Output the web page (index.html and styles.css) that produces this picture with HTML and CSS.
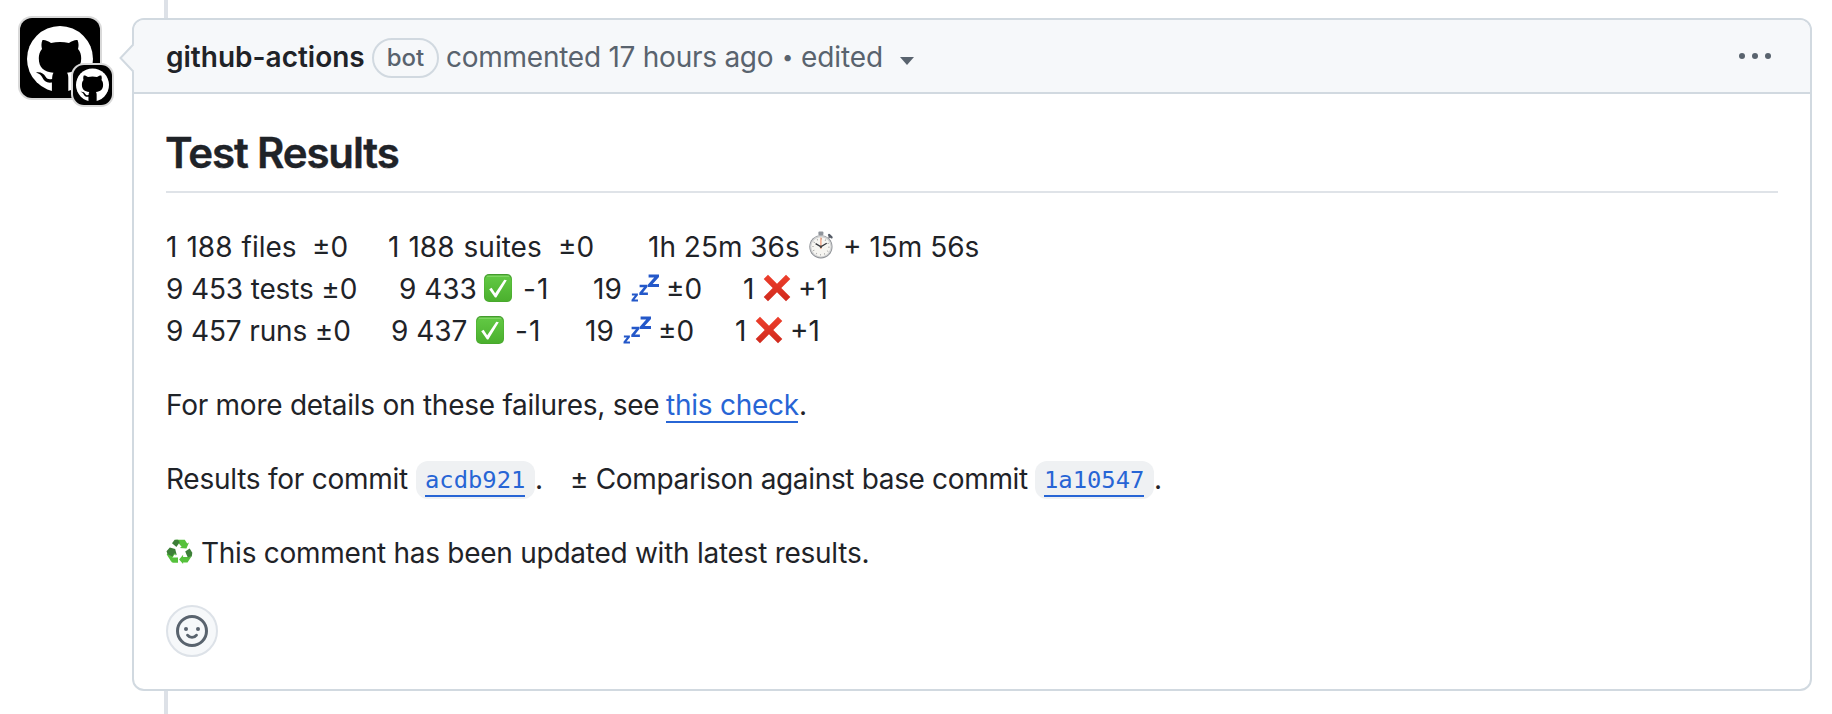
FILE: index.html
```html
<!DOCTYPE html>
<html lang="en">
<head>
<meta charset="utf-8">
<title>Test Results</title>
<link rel="stylesheet" href="styles.css">
</head>
<body>
<svg class="defs" width="0" height="0">
  <defs>
    <linearGradient id="green" x1="0" y1="0" x2="0" y2="1"><stop offset="0" stop-color="#62c944"/><stop offset="1" stop-color="#4bb02e"/></linearGradient>
    <linearGradient id="rim" x1="0" y1="0" x2="0" y2="1"><stop offset="0" stop-color="#42992c"/><stop offset=".25" stop-color="#55bb38"/><stop offset="1" stop-color="#48a82d"/></linearGradient>
    <linearGradient id="red" x1="0" y1="0" x2="0" y2="1"><stop offset="0" stop-color="#ee3f2c"/><stop offset="1" stop-color="#cf291d"/></linearGradient>
    <symbol id="mark" viewBox="0 0 66 66"><circle cx="33" cy="33" r="33" fill="#fff"/><path d="M15.5 14c3-.3 5.700 1.200 8.500 3 6-1.400 12-1.400 18 0 2.800-1.800 5.500-3.300 8.500-3 1.300 3 1.300 6 .5 9 2.300 2.600 3.200 5.600 3.200 9.300C54.200 42 49 45.800 40 46.800c1 1.400 1.300 3 1.300 5V68H24.900V56.600C19.500 57.300 17.200 55 15.500 51.800c-1.300-2.500-3-4.300-6.500-5.300 5-.7 7.500 1 9.600 4.300 1.700 2.500 3.600 2.800 6.500 2.200.1-2.400.4-4.700 1.400-6.200C17 45.800 11.800 42 11.800 32.300c0-3.700 1-6.700 3.200-9.300-.8-3-.8-6 .5-9z" fill="#000"/></symbol>
    <symbol id="check" viewBox="0 0 28 28"><rect width="28" height="28" rx="5" fill="url(#rim)"/><rect x="1" y="1.6" width="26" height="25.4" rx="4.2" fill="url(#green)"/><path d="M3 2.2h22" stroke="#8bdd70" stroke-width="1" stroke-linecap="round"/><path d="M5.2 15.2 7.6 13.7 11.2 19.2 20.3 5.8 22.8 6.3 12.3 23.5H11z" fill="#fff"/></symbol>
    <symbol id="cross" viewBox="0 0 28 28"><path d="M5 .8 14 9.7 23 .8 27.3 5 18.3 14l9 9L23 27.2l-9-8.900-9 8.900L.7 23l9-9-9-9z" fill="url(#red)"/></symbol>
    <symbol id="zzz" viewBox="0 0 28 28"><g fill="#2458c9"><path d="M17.600.6H28v2.500L21.700 10H28v3H17v-2.600l6.200-6.800h-5.600z"/><path d="M8.600 10.800h8v2L12 18.500h4.900v2.400H8.300v-2.100l4.600-5.600H8.600z"/><path d="M.9 19.500h6v1.700l-3.400 4.300H7v2H.5v-1.800l3.400-4.300h-3z"/></g></symbol>
    <symbol id="watch" viewBox="0 0 28 28"><rect x="11.4" y=".4" width="5" height="3.8" rx="1" fill="#8f949b"/><path d="m21.600 6.800 1.900-1.900" stroke="#73777f" stroke-width="2"/><path d="m22 3.900 2.600 2.500" stroke="#555b66" stroke-width="2.2" stroke-linecap="round"/><circle cx="13.9" cy="15.8" r="11.6" fill="#8a8d92"/><circle cx="13.9" cy="15.6" r="10.8" fill="#d1d2d3"/><circle cx="13.9" cy="15.8" r="9.6" fill="#f6f5f1"/><circle cx="13.9" cy="15.8" r="8" fill="none" stroke="#999" stroke-width="1.6" stroke-dasharray=".7 3.49"/><path d="M13.900 18V6.500" stroke="#ef9a78" stroke-width="1.2"/><path d="m8.600 12.600 5.300 3.200 5.800-3.600" fill="none" stroke="#33363b" stroke-width="1.3"/><circle cx="13.9" cy="15.8" r="1.2" fill="#444"/></symbol>
  </defs>
</svg>
<main class="timeline">
  <div class="avatar-column">
    <div class="avatar">
      <svg class="avatar-mark"><use href="#mark"/></svg>
      <div class="avatar-badge"><svg class="badge-mark"><use href="#mark"/></svg></div>
    </div>
  </div>
  <article class="comment">
    <svg class="caret-left" viewBox="0 0 16 30"><path d="M15 1 2 15l13 14z" class="caret-fill"/><path d="M14.500 1.200 1.500 15l13 13.800" class="caret-line"/></svg>
    <header class="comment-header">
      <strong class="author">github-actions</strong>
      <span class="bot-label">bot</span>
      <span class="when">commented 17 hours ago</span>
      <span class="dot">•</span>
      <span class="edited">edited</span>
      <svg class="dropdown" viewBox="0 0 14 8"><path d="M0 0h14L7 8z"/></svg>
      <svg class="kebab" viewBox="0 0 32 6"><circle cx="3" cy="3" r="3"/><circle cx="16" cy="3" r="3"/><circle cx="29" cy="3" r="3"/></svg>
    </header>
    <div class="comment-body">
      <h2>Test Results</h2>
      <div class="results">
        <div class="row"><span class="w-files">1 188 files</span><span class="w-fdelta">±0</span><span class="w-suites">1 188 suites</span><span class="w-sdelta">±0</span><span class="w-time">1h 25m 36s</span><svg class="emoji after-time"><use href="#watch"/></svg><span>+ 15m 56s</span></div>
        <div class="row"><span class="w-tests">9 453 tests ±0</span><span class="w-pass">9 433</span><svg class="emoji after-check"><use href="#check"/></svg><span class="w-pdelta">-1</span><span class="w-skip">19</span><svg class="emoji after-zzz"><use href="#zzz"/></svg><span class="w-skdelta">±0</span><span class="w-fail">1</span><svg class="emoji after-cross"><use href="#cross"/></svg><span>+1</span></div>
        <div class="row"><span class="w-runs">9 457 runs ±0</span><span class="w-pass">9 437</span><svg class="emoji after-check"><use href="#check"/></svg><span class="w-pdelta">-1</span><span class="w-skip">19</span><svg class="emoji after-zzz"><use href="#zzz"/></svg><span class="w-skdelta">±0</span><span class="w-fail">1</span><svg class="emoji after-cross"><use href="#cross"/></svg><span>+1</span></div>
      </div>
      <p class="row"><span class="w-details">For more details on these failures, see</span><a class="check-link">this check</a><span class="stop">.</span></p>
      <p class="row"><span class="w-commit">Results for commit</span><code><a>acdb921</a></code><span class="w-stop">.</span><span class="w-compare">± Comparison against base commit</span><code><a>1a10547</a></code><span>.</span></p>
      <p class="row"><svg class="recycle" viewBox="0 0 27 25"><g fill="#55c13b"><path d="m9.500.8 9.300 0 2.400 3.700 1.800-1-2.600 6-6.700-.6 1.900-1.200z"/><path d="m1 12.200 6.700-1.300 2.400 5.600-1.800-1-2.500 4.500 0 3.500L.7 15.500l1.800-2.300z"/><path d="m25.800 17-4.300 6.600h-4.400V25l-4-4.500 4-4.800v2.200h4.600z"/></g><g fill="#3d7f38"><path d="M8.600.8 6 4.300 10.400 8l3.300-4.800L12 .8z"/><path d="m.5 12.200 3.300-3.600 5.400 1.300 1.600 6.400-2.400-2.200-2 3.300-4.800-2.200z"/><path d="m19.200 12.400 4.500-3 2.600 4.400-.5 3.500-4 1.100z"/></g><path d="M7 18.500h5v5.200H6.500L4 19.800z" fill="#55c13b"/></svg><span class="updated">This comment has been updated with latest results.</span></p>
      <button class="reaction" aria-label="Add reaction"><svg viewBox="0 0 32 32"><circle cx="16" cy="16" r="14.5" fill="none" stroke="#59636e" stroke-width="3"/><circle cx="10" cy="14" r="2" fill="#59636e"/><circle cx="22" cy="14" r="2" fill="#59636e"/><path d="M11.500 20.200c2.200 3 6.800 3 9 0" fill="none" stroke="#59636e" stroke-width="2.8" stroke-linecap="round"/></svg></button>
    </div>
  </article>
</main>
</body>
</html>
```
FILE: styles.css
```css
* { box-sizing: border-box; }
html, body { height: 714px; overflow: hidden; }
body { margin: 0; background: #fff; color: #1f2328; font-family: Inter, "Liberation Sans", sans-serif; font-size: 28px; line-height: 42px; }
svg { display: block; flex: none; }
.defs { position: absolute; }
.timeline { display: flex; height: 714px; padding: 18px 20px 23px; overflow: hidden; background: linear-gradient(#dde1e7, #dde1e7) 164px 0 / 4px 714px no-repeat; }
.avatar-column { flex: 0 0 112px; }
.avatar { position: relative; display: flex; width: 80px; height: 80px; padding: 8px 7px; border-radius: 12px; background: #000; box-shadow: 0 0 0 2px #d9d9d9; overflow: visible; }
.avatar-mark { width: 66px; height: 66px; }
.avatar-badge { position: absolute; left: 53px; top: 47px; display: flex; width: 39px; height: 40px; padding: 3px; border-radius: 11px; background: #000; box-shadow: 0 0 0 2px #d9d9d9; }
.badge-mark { width: 33px; height: 34px; }
.comment { position: relative; flex: 1; height: 673px; border: 2px solid #d1d9e0; border-radius: 12px; background: #fff; }
.caret-left { position: absolute; left: -15px; top: 23px; width: 16px; height: 30px; }
.caret-fill { fill: #f6f8fa; }
.caret-line { fill: none; stroke: #d1d9e0; stroke-width: 2; }
.comment-header { display: flex; align-items: center; height: 74px; padding: 2px 39px 0 32px; border-bottom: 2px solid #d1d9e0; border-radius: 10px 10px 0 0; background: #f6f8fa; color: #59636e; white-space: nowrap; }
.author { width: 206px; color: #1f2328; font-weight: 600; }
.bot-label { display: flex; align-items: center; justify-content: center; width: 67px; height: 40px; margin-top: 2px; border: 2px solid #d1d9e0; border-radius: 20px; font-size: 24px; font-weight: 500; }
.when { width: 336px; margin-left: 7px; letter-spacing: -.25px; }
.dot { width: 19px; font-size: 20px; }
.edited { width: 99px; letter-spacing: -.1px; }
.dropdown { width: 14px; height: 8px; margin-top: 8px; fill: #59636e; }
.kebab { width: 32px; height: 6px; margin-left: auto; margin-top: -2px; fill: #59636e; }
.comment-body { padding: 32px; }
h2 { height: 67px; margin: 0 0 33px; border-bottom: 2px solid #dfe3e8; font-size: 42px; line-height: 54px; font-weight: 600; letter-spacing: -1.15px; text-indent: -1px; -webkit-text-stroke: .4px #1f2328; }
.row { display: flex; height: 42px; margin: 0; white-space: nowrap; }
.results { margin-bottom: 32px; }
p.row { margin-bottom: 32px; }
.emoji { width: 28px; height: 28px; margin-top: 6px; }
.w-files { width: 146px; word-spacing: 1.2px; }
.w-fdelta { width: 76px; }
.w-suites { width: 170px; word-spacing: 1.2px; }
.w-sdelta { width: 90px; }
.w-time { width: 159px; }
.after-time { margin-right: 8px; margin-top: 5px; }
.w-tests { width: 233px; letter-spacing: -.14px; }
.w-runs { width: 225px; letter-spacing: -.14px; }
.w-pass { width: 85px; }
.after-check { margin-right: 11px; }
.w-pdelta { width: 70px; letter-spacing: 1px; }
.w-skip { width: 38px; }
.after-zzz { margin-right: 7px; }
.w-skdelta { width: 77px; }
.w-fail { width: 20px; }
.after-cross { margin-right: 7px; }
.w-details { width: 500px; letter-spacing: -.26px; }
a { color: #2765d5; }
.check-link { width: 132px; height: 39px; border-bottom: 2px solid; letter-spacing: -.25px; }
.stop { margin-left: 1px; }
.w-commit { width: 250px; letter-spacing: -.25px; }
code { display: flex; width: 119px; height: 38px; margin-top: 3px; padding: 0 9px; border-radius: 12px; background: #eff1f3; font: 23.8px/38px "DejaVu Sans Mono", monospace; }
code a { height: 36px; border-bottom: 2px solid; }
.w-stop { width: 35px; }
.w-compare { width: 465px; letter-spacing: -.34px; }
.recycle { width: 27px; height: 25px; margin: 7px 8px 0 0; }
.updated { letter-spacing: -.26px; }
.reaction { display: flex; align-items: center; justify-content: center; width: 52px; height: 52px; margin-top: -1px; padding: 0; border: 2px solid #dde2e8; border-radius: 50%; background: #f6f8fa; }
.reaction svg { width: 32px; height: 32px; }
```
